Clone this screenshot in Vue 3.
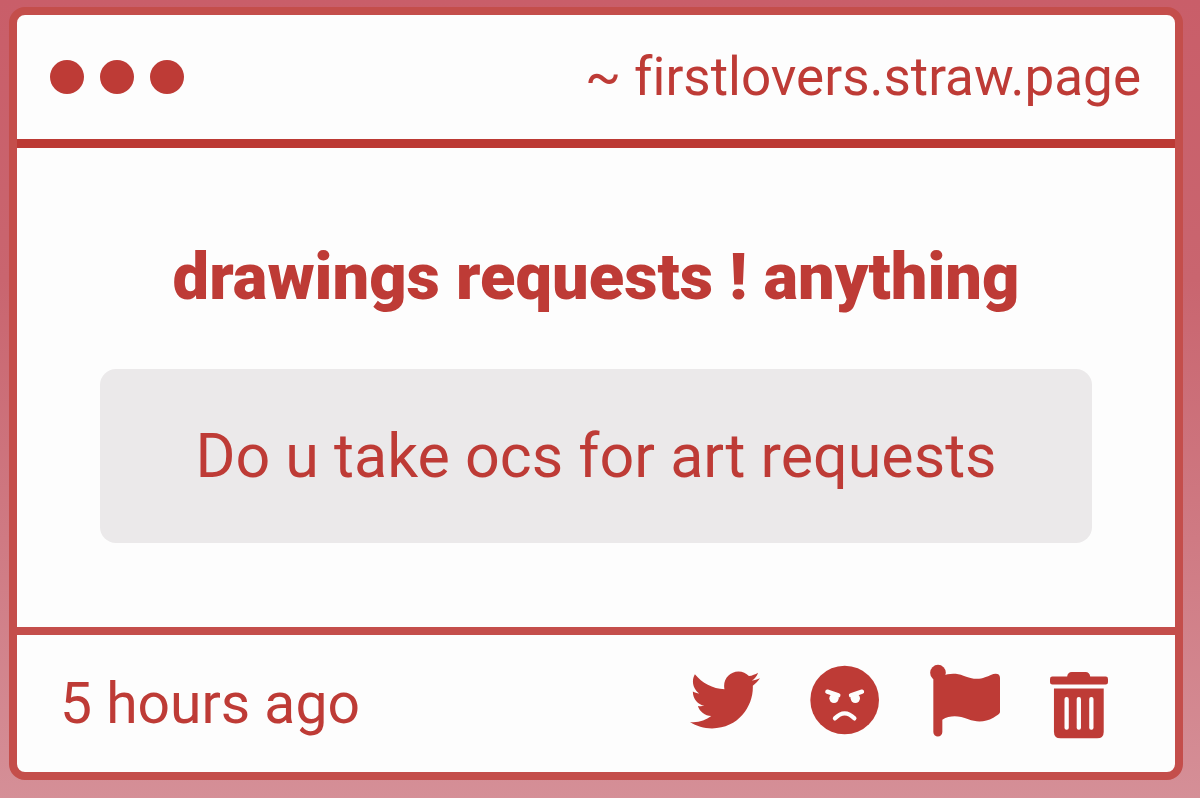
<script setup>
const dots = [1, 2, 3]
</script>

<template>
  <main class="page">
    <article class="card">
      <header class="bar">
        <div class="dots" aria-hidden="true">
          <span v-for="d in dots" :key="d" class="dot"></span>
        </div>
        <a class="site" href="#">~ firstlovers.straw.page</a>
      </header>

      <section class="body">
        <h1 class="title">drawings requests ! anything</h1>
        <p class="message">Do u take ocs for art requests</p>
      </section>

      <footer class="foot">
        <time class="time">5 hours ago</time>
        <div class="actions">
          <button class="action" type="button" aria-label="Share on Twitter">
            <svg class="icon" viewBox="0 0 512 512">
              <path d="M459.37 151.716c.325 4.548.325 9.097.325 13.645 0 138.72-105.583 298.558-298.558 298.558-59.452 0-114.68-17.219-161.137-47.106 8.447.974 16.568 1.299 25.34 1.299 49.055 0 94.213-16.568 130.274-44.832-46.132-.975-84.792-31.188-98.112-72.772 6.498.974 12.995 1.624 19.818 1.624 9.421 0 18.843-1.3 27.614-3.573-48.081-9.747-84.143-51.98-84.143-102.985v-1.299c13.969 7.797 30.214 12.67 47.431 13.319-28.264-18.843-46.781-51.005-46.781-87.391 0-19.492 5.197-37.36 14.294-52.954 51.655 63.675 129.3 105.258 216.365 109.807-1.624-7.797-2.599-15.918-2.599-24.04 0-57.828 46.782-104.934 104.934-104.934 30.213 0 57.502 12.67 76.67 33.137 23.715-4.548 46.456-13.32 66.599-25.34-7.798 24.366-24.366 44.833-46.132 57.827 21.117-2.273 41.584-8.122 60.426-16.243-14.292 20.791-32.161 39.308-52.628 54.253z" />
            </svg>
          </button>
          <button class="action" type="button" aria-label="Block sender">
            <svg class="icon" viewBox="-1 -5 210 216">
              <circle cx="103" cy="103" r="103" />
              <g class="cut">
                <path d="M51 78 L84 89 M155 78 L122 89" stroke-width="13" />
                <path d="M74 158 Q103 128 132 158" stroke-width="13" />
              </g>
              <g class="hole">
                <circle cx="71" cy="98" r="14" />
                <circle cx="135" cy="98" r="14" />
              </g>
            </svg>
          </button>
          <button class="action" type="button" aria-label="Report">
            <svg class="icon" viewBox="0 -2 210 216">
              <circle cx="24" cy="24" r="23.500" />
              <path d="M10 30 L37 34 C57 25 80 25 100 33 C125 43 145 46 165 38 C178 33 188 27 197 27 Q210 27 210 40 V143 Q208 150 190 159 C165 173 140 173 115 164 C85 152 60 152 37 165 V202 A13.500 13.500 0 0 1 10 202 Z" />
            </svg>
          </button>
          <button class="action slim" type="button" aria-label="Delete">
            <svg class="icon" viewBox="0 -22 176 216">
              <path d="M52 15 Q54 1 66 1 H108 Q120 1 122 15 H169 Q176 15 176 22 V32 Q176 39 169 39 H7 Q0 39 0 32 V22 Q0 15 7 15 Z" />
              <path d="M12 51 H163 V182 Q163 202 143 202 H32 Q12 202 12 182 Z" />
              <g class="hole">
                <rect x="44" y="77" width="13" height="99" rx="6" />
                <rect x="81" y="77" width="13" height="99" rx="6" />
                <rect x="119" y="77" width="13" height="99" rx="6" />
              </g>
            </svg>
          </button>
        </div>
      </footer>
    </article>
  </main>
</template>

<style>
body {
  margin: 0;
}
</style>

<style scoped>
.page {
  box-sizing: border-box;
  display: flex;
  min-height: 100vh;
  padding: 7px 17px 18px 9px;
  background: linear-gradient(#c95e69, #c9656f 35%, #d58f97);
  font-family: Roboto, "Liberation Sans", sans-serif;
  font-variant-ligatures: none;
  color: #be3b36;
}
.card {
  box-sizing: border-box;
  display: flex;
  flex: 1;
  flex-direction: column;
  border: 8px solid #c44e4b;
  border-radius: 16px;
  background: #fdfdfd;
}
.bar {
  display: flex;
  align-items: center;
  justify-content: space-between;
  min-height: 124px;
  padding: 0 34px 0 33px;
  border-bottom: 9px solid #bc3934;
}
.dots {
  display: flex;
  gap: 16px;
}
.dot {
  width: 34px;
  height: 34px;
  border-radius: 50%;
  background: #be3b36;
}
.site {
  color: inherit;
  font-size: 53px;
  line-height: 64px;
  text-decoration: none;
}
.body {
  display: flex;
  flex: 1;
  flex-direction: column;
  justify-content: center;
  gap: 52px;
  padding: 4px 83px 0;
  text-align: center;
}
.title {
  margin: 0;
  font-size: 65px;
  font-weight: 900;
  line-height: 80px;
}
.message {
  margin: 0;
  padding: 48px 32px;
  border-radius: 16px;
  background: #ebe9ea;
  font-size: 61px;
  line-height: 78px;
}
.foot {
  display: flex;
  align-items: center;
  justify-content: space-between;
  min-height: 137px;
  padding: 0 67px 0 43px;
  border-top: 8px solid #c44e4b;
}
.time {
  font-size: 57px;
  line-height: 64px;
}
.actions {
  display: flex;
  gap: 50px;
  padding-bottom: 8px;
}
.action {
  width: 70px;
  height: 72px;
  padding: 0;
  border: 0;
  background: none;
  color: inherit;
  cursor: pointer;
}
.slim {
  width: 58px;
}
.icon {
  display: block;
  width: 100%;
  height: 100%;
  overflow: visible;
  fill: currentColor;
}
.cut {
  fill: none;
  stroke: #fdfdfd;
  stroke-linecap: round;
}
.hole {
  fill: #fdfdfd;
}
</style>
